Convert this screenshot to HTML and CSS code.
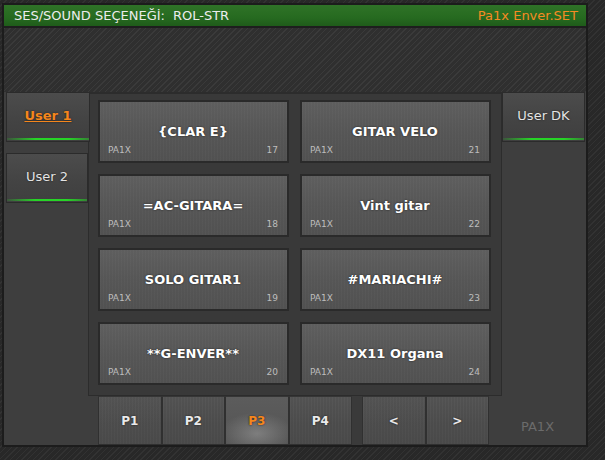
FILE: index.html
```html
<!DOCTYPE html>
<html lang="tr">
<head>
<meta charset="utf-8">
<title>Ses Seçeneği</title>
<link rel="stylesheet" href="styles.css">
</head>
<body>
<div class="window">
  <header class="titlebar">
    <span class="title">SES/SOUND SEÇENEĞİ:<span class="sel">ROL-STR</span></span>
    <span class="file">Pa1x Enver.SET</span>
  </header>
  <div class="band"></div>
  <div class="body">
    <nav class="tabs-left">
      <div class="tab active"><span>User 1</span></div>
      <div class="tab"><span>User 2</span></div>
    </nav>
    <section class="panel">
      <div class="tile"><div class="name">{CLAR E}</div><div class="meta"><span>PA1X</span><span>17</span></div></div>
      <div class="tile"><div class="name">GITAR VELO</div><div class="meta"><span>PA1X</span><span>21</span></div></div>
      <div class="tile"><div class="name">=AC-GITARA=</div><div class="meta"><span>PA1X</span><span>18</span></div></div>
      <div class="tile"><div class="name">Vint gitar</div><div class="meta"><span>PA1X</span><span>22</span></div></div>
      <div class="tile"><div class="name">SOLO GITAR1</div><div class="meta"><span>PA1X</span><span>19</span></div></div>
      <div class="tile"><div class="name">#MARIACHI#</div><div class="meta"><span>PA1X</span><span>23</span></div></div>
      <div class="tile"><div class="name">**G-ENVER**</div><div class="meta"><span>PA1X</span><span>20</span></div></div>
      <div class="tile"><div class="name">DX11 Organa</div><div class="meta"><span>PA1X</span><span>24</span></div></div>
    </section>
    <aside class="tabs-right">
      <div class="tab"><span>User DK</span></div>
    </aside>
    <div class="pager">
      <div class="pg">P1</div>
      <div class="pg">P2</div>
      <div class="pg current">P3</div>
      <div class="pg">P4</div>
      <div class="pg-gap"></div>
      <div class="pg">&lt;</div>
      <div class="pg">&gt;</div>
      <div class="brand">PA1X</div>
    </div>
  </div>
</div>
</body>
</html>
```
FILE: styles.css
```css
html, body {
  margin: 0;
  padding: 0;
}
body {
  width: 605px;
  height: 460px;
  overflow: hidden;
  font-family: "DejaVu Sans", "Liberation Sans", sans-serif;
  background:
    repeating-linear-gradient(135deg, #323232 0 1px, #282828 1px 4px);
}
.window {
  box-sizing: border-box;
  margin: 3px 0 0 2px;
  width: 586px;
  height: 444px;
  border: 2px solid #1c1c1c;
  background: #3e3e3e;
  display: flex;
  flex-direction: column;
}
.titlebar {
  height: 21px;
  border-bottom: 2px solid #1e1e1e;
  display: flex;
  justify-content: space-between;
  align-items: center;
  padding: 0 8px 0 10px;
  font-size: 13px;
  line-height: 21px;
  background: linear-gradient(#2f7327, #266a20 60%, #1f5c1a);
}
.title {
  color: #ececec;
}
.sel {
  margin-left: 8px;
}
.file {
  color: #f58a23;
}
.band {
  height: 64px;
  background: repeating-linear-gradient(135deg, #3a3a3a 0 1px, #2f2f2f 1px 4px);
}
.body {
  flex: 1;
  display: grid;
  grid-template-columns: 84px 414px 84px;
  grid-template-rows: 304px 49px;
}
.tabs-left {
  grid-column: 1;
  grid-row: 1 / span 2;
  display: flex;
  flex-direction: column;
  gap: 11px;
  padding-left: 2px;
}
.tabs-right {
  grid-column: 3;
  grid-row: 1;
}
.tab {
  box-sizing: border-box;
  width: 82px;
  height: 50px;
  border: 1px solid #2b2b2b;
  display: flex;
  align-items: center;
  justify-content: center;
  padding-bottom: 3px;
  font-size: 13px;
  color: #e4e4e4;
  text-shadow: 0 0 2px rgba(0,0,0,.6);
  background:
    linear-gradient(90deg, rgba(40,200,40,.15), #27d427 35%, #27d427 75%, rgba(40,200,40,.5)) left 0 bottom 1px / 100% 2px no-repeat,
    linear-gradient(#4c4c4c, #434343 60%, #3f3f3f);
}
.tabs-left .tab.active {
  width: 84px;
  position: relative;
  z-index: 1;
}
.tab.active span {
  color: #f5861c;
  font-weight: bold;
  text-decoration: underline;
}
.tabs-right .tab {
  width: 83px;
}
.panel {
  grid-column: 2;
  grid-row: 1;
  box-sizing: border-box;
  border: 1px solid #2c2c2c;
  border-top-width: 2px;
  background: #393939;
  display: grid;
  grid-template-columns: 191px 191px;
  grid-auto-rows: 63px;
  column-gap: 11px;
  row-gap: 11px;
  padding: 6px 0 0 9px;
}
.tile {
  box-sizing: border-box;
  border: 2px solid #2a2a2a;
  background:
    repeating-linear-gradient(90deg, rgba(255,255,255,.015) 0 1px, rgba(0,0,0,.015) 1px 3px),
    linear-gradient(#5f5f5f, #575757 50%, #525252);
  display: flex;
  flex-direction: column;
  padding: 0 9px 5px 8px;
  color: #fff;
}
.name {
  margin-top: 22px;
  text-align: center;
  font-size: 13px;
  font-weight: bold;
  line-height: 16px;
  text-shadow: 0 0 2px rgba(0,0,0,.7);
}
.meta {
  margin-top: auto;
  display: flex;
  justify-content: space-between;
  font-size: 9px;
  line-height: 11px;
  color: #bdbdbd;
}
.pager {
  grid-column: 2 / span 2;
  grid-row: 2;
  display: flex;
  padding-left: 10px;
}
.pg {
  box-sizing: border-box;
  width: 63.5px;
  border: 1px solid #303030;
  border-top-color: #363636;
  display: flex;
  align-items: center;
  justify-content: center;
  font-size: 12px;
  font-weight: bold;
  color: #eaeaea;
  text-shadow: 0 0 2px rgba(0,0,0,.7);
  background:
    repeating-linear-gradient(90deg, rgba(255,255,255,.015) 0 1px, rgba(0,0,0,.02) 1px 3px),
    linear-gradient(#545454, #4d4d4d 60%, #4a4a4a);
}
.pg.current {
  color: #f5861c;
  background:
    radial-gradient(ellipse 60% 45% at 50% 78%, rgba(200,200,200,.35), rgba(200,200,200,0)),
    linear-gradient(#5c5c5c, #545454);
}
.pg-gap {
  width: 10px;
  box-sizing: border-box;
  background: #3a3a3a;
}
.brand {
  flex: 1;
  display: flex;
  align-items: center;
  justify-content: center;
  padding-top: 11px;
  font-size: 13px;
  color: #6b6b6b;
}
```
